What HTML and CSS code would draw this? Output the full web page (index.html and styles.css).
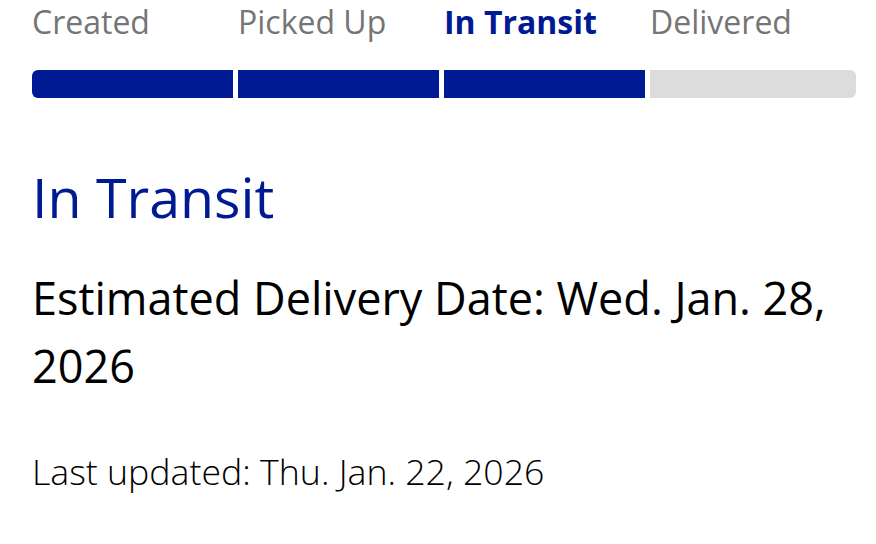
FILE: index.html
```html
<!DOCTYPE html>
<html lang="en">
<head>
<meta charset="utf-8">
<title>Tracking</title>
<link rel="stylesheet" href="styles.css">
</head>
<body>
<main class="tracker">
  <div class="steps">
    <div class="step-label">Created</div>
    <div class="step-label">Picked Up</div>
    <div class="step-label current">In Transit</div>
    <div class="step-label">Delivered</div>
  </div>
  <div class="bar">
    <div class="seg done first"></div>
    <div class="seg done"></div>
    <div class="seg done"></div>
    <div class="seg todo last"></div>
  </div>
  <h1 class="status">In Transit</h1>
  <p class="eta">Estimated Delivery Date: Wed. Jan. 28, 2026</p>
  <p class="updated">Last updated: Thu. Jan. 22, 2026</p>
</main>
</body>
</html>
```

FILE: styles.css
```css
html, body {
  margin: 0;
  padding: 0;
  background: #ffffff;
}
body {
  font-family: "Open Sans", "Noto Sans", sans-serif;
  color: #000;
}
.tracker {
  padding: 0 20px 0 32px;
}
.steps,
.bar {
  display: grid;
  grid-template-columns: 201px 201px 201px 1fr;
  column-gap: 5px;
}
.steps {
  height: 43px;
  align-items: start;
}
.step-label {
  font-size: 32px;
  line-height: 43px;
  color: #757575;
  white-space: nowrap;
}
.step-label.current {
  color: #001a94;
  font-weight: 700;
}
.bar {
  height: 28px;
  margin-top: 27px;
}
.seg.done { background: #001a94; }
.seg.todo { background: #dcdcdc; }
.seg.first { border-radius: 6px 0 0 6px; }
.seg.last { border-radius: 0 6px 6px 0; }
.status {
  margin: 63px 0 0;
  font-size: 55.5px;
  font-weight: 400;
  line-height: 72px;
  color: #001a94;
}
.eta {
  margin: 31px 0 0;
  font-size: 45px;
  line-height: 68px;
}
.updated {
  margin: 47px 0 0;
  font-size: 35.7px;
  font-weight: 300;
  line-height: 48px;
}
```
